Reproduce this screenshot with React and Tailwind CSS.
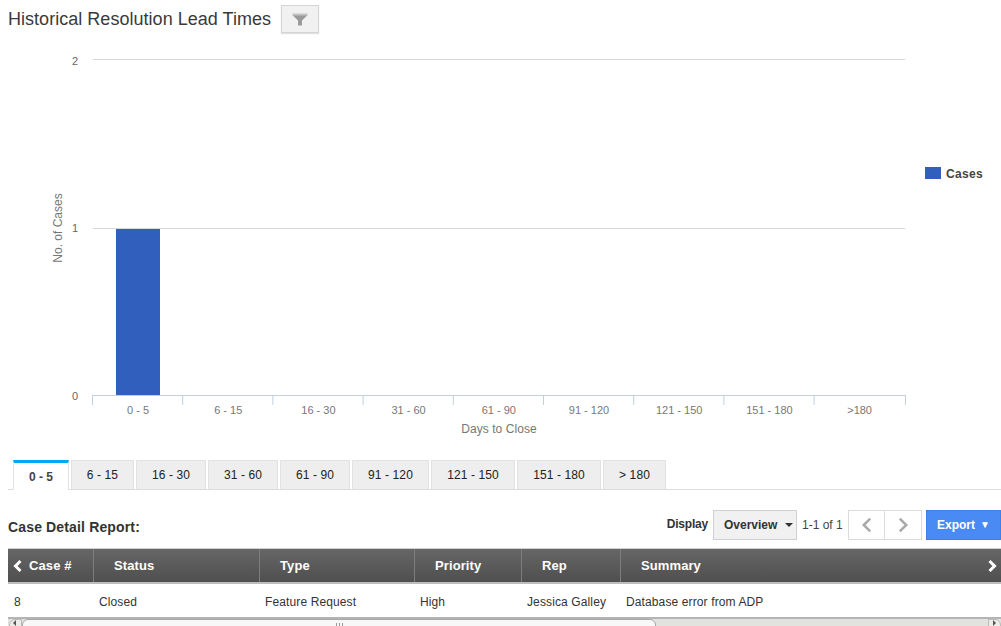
const tabs = [
    { label: "0 - 5", w: "w-[56px]", active: true },
    { label: "6 - 15", w: "w-[63px]" },
    { label: "16 - 30", w: "w-[70px]" },
    { label: "31 - 60", w: "w-[70px]" },
    { label: "61 - 90", w: "w-[70px]" },
    { label: "91 - 120", w: "w-[77px]" },
    { label: "121 - 150", w: "w-[84px]" },
    { label: "151 - 180", w: "w-[84px]" },
    { label: "> 180", w: "w-[63px]" },
]

const columns = [
    { label: "Status", cell: "Closed", w: "w-[166px]" },
    { label: "Type", cell: "Feature Request", w: "w-[155px]" },
    { label: "Priority", cell: "High", w: "w-[107px]" },
    { label: "Rep", cell: "Jessica Galley", w: "w-[99px]" },
]

const ticks = ["0 - 5", "6 - 15", "16 - 30", "31 - 60", "61 - 90", "91 - 120", "121 - 150", "151 - 180", ">180"]

const Chevron = ({ dir, size = 14, width = 2, color = "currentColor" }) => (
    <svg width={size} height={size} viewBox="0 0 14 14" fill="none">
        <path d={dir === "left" ? "M9.5 2 L4.5 7 L9.5 12" : "M4.5 2 L9.5 7 L4.5 12"} stroke={color} strokeWidth={width} />
    </svg>
)

const Chart = () => (
    <svg width="1001" height="405" viewBox="0 40 1001 405" className="block" fontFamily="'Liberation Sans', sans-serif">
        <line x1="93" x2="905" y1="59.5" y2="59.5" stroke="#d8d8d8" />
        <line x1="93" x2="905" y1="228.5" y2="228.5" stroke="#d8d8d8" />
        <text x="78" y="65" textAnchor="end" fontSize="11" fill="#666">2</text>
        <text x="78" y="232" textAnchor="end" fontSize="11" fill="#666">1</text>
        <text x="78" y="400" textAnchor="end" fontSize="11" fill="#666">0</text>
        <text transform="translate(62 228) rotate(-90)" textAnchor="middle" fontSize="12" fill="#777">No. of Cases</text>
        <rect x="116" y="229" width="44" height="166.5" fill="#315fbd" />
        <line x1="92.5" x2="905.5" y1="395.5" y2="395.5" stroke="#c0d0e0" />
        {ticks.map((t, i) => (
            <g key={t}>
                <line x1={92.5 + i * 90.2} x2={92.5 + i * 90.2} y1="395" y2="405" stroke="#c0d0e0" />
                <text x={138 + i * 90.2} y="414" textAnchor="middle" fontSize="11" fill="#777">{t}</text>
            </g>
        ))}
        <line x1="905.5" x2="905.5" y1="395" y2="405" stroke="#c0d0e0" />
        <text x="499" y="433" textAnchor="middle" fontSize="12" letterSpacing="0.05" fill="#777">Days to Close</text>
        <rect x="925" y="167" width="16" height="12" fill="#315fbd" />
        <text x="946" y="178" fontSize="12" fontWeight="700" letterSpacing="0.3" fill="#444">Cases</text>
    </svg>
)

export default function App() {
    return (
        <div className="w-[1001px] h-[626px] overflow-hidden bg-white font-['Liberation_Sans',sans-serif] text-[#333]">
            {/* Title */}
            <div className="h-[40px] pl-2 pt-[5px] flex items-start gap-[10px]">
                <h1 className="text-[18px] leading-[28px] tracking-[0.03px] text-[#3a3a3a]">Historical Resolution Lead Times</h1>
                <button className="w-[38px] h-[28px] flex items-center justify-center bg-[#f1f1f1] border border-[#d4d4d4] shadow-[0_1px_1px_rgba(0,0,0,0.12)]">
                    <svg width="16" height="13" viewBox="0 0 16 13">
                        <path d="M0.5 2 H15.5 L10 7.5 V12.5 H6 V7.5 Z" fill="#9a9a9a" />
                        <rect x="0.5" y="0.5" width="15" height="2" fill="#c4c4c4" />
                    </svg>
                </button>
            </div>

            <Chart />

            {/* Tabs */}
            <div className="mt-[15px] ml-[8px] h-[30px] pl-[5px] flex gap-[2px] border-b border-[#dcdcdc]">
                {tabs.map(t => (
                    <div
                        key={t.label}
                        className={t.active
                            ? `${t.w} h-[30px] bg-white border-t-[3px] border-t-[#00aaef] border-x border-x-[#e2e2e2] flex items-center justify-center text-[12px] font-bold text-[#444]`
                            : `${t.w} h-[29px] bg-[#eeeeee] border border-[#e2e2e2] border-b-0 flex items-center justify-center text-[12px] tracking-[0.1px] text-[#222]`}
                    >
                        {t.label}
                    </div>
                ))}
            </div>

            {/* Report header */}
            <div className="mt-[20px] h-[30px] pl-2 flex items-center justify-between">
                <h2 className="text-[14px] font-bold tracking-[0.15px] text-[#333] pt-[5px]">Case Detail Report:</h2>
                <div className="flex items-center">
                    <span className="text-[12px] font-bold tracking-[-0.2px] text-[#333] mr-[5px] mb-[2px]">Display</span>
                    <div className="w-[84px] h-[30px] bg-[#f1f1f1] border border-[#d0d0d0] flex items-center justify-between pl-[10px] pr-[2px] text-[12px] font-bold text-[#333]">
                        Overview
                        <span className="w-0 h-0 border-x-[4px] border-x-transparent border-t-[4px] border-t-[#333] mr-[1px]" />
                    </div>
                    <span className="ml-[5px] text-[12px] text-[#444] w-[46px]">1-1 of 1</span>
                    <div className="flex h-[30px] border border-[#dcdcdc] bg-white">
                        <div className="w-[36px] flex items-center justify-center border-r border-[#dcdcdc]">
                            <Chevron dir="left" size={18} color="#aaa" width={2} />
                        </div>
                        <div className="w-[36px] flex items-center justify-center">
                            <Chevron dir="right" size={18} color="#aaa" width={2} />
                        </div>
                    </div>
                    <div className="ml-[4px] w-[75px] h-[30px] bg-[#4a8af4] border border-[#3f7fe6] flex items-center justify-center gap-[5px] text-[12px] font-bold text-white">
                        Export
                        <span className="text-[10px] leading-none">▼</span>
                    </div>
                </div>
            </div>

            {/* Table */}
            <div className="ml-[8px] mt-[8px]">
                <div className="h-[36px] flex items-stretch border-t border-t-[#cfcfcf] border-b-[2px] border-b-[#bdbdbd] bg-gradient-to-b from-[#666666] to-[#4f4f4f] text-[13px] font-bold tracking-[0.1px] text-white">
                    <div className="w-[86px] flex items-center pl-[3px] gap-[4px] border-r border-[#7d7d7d]">
                        <Chevron dir="left" size={14} width={3} />
                        Case #
                    </div>
                    {columns.map(c => (
                        <div key={c.label} className={`${c.w} flex items-center pl-[20px] border-r border-[#7d7d7d]`}>{c.label}</div>
                    ))}
                    <div className="flex-1 flex items-center justify-between pl-[20px] pr-[2px]">
                        Summary
                        <Chevron dir="right" size={14} width={3} />
                    </div>
                </div>
                <div className="h-[33px] pt-[3px] flex items-center text-[12px] tracking-[0.12px] text-[#333]">
                    <div className="w-[86px] pl-[6px]">8</div>
                    {columns.map(c => (
                        <div key={c.label} className={`${c.w} pl-[5px]`}>{c.cell}</div>
                    ))}
                    <div className="pl-[5px]">Database error from ADP</div>
                </div>
                {/* Scrollbar */}
                <div className="h-[9px] flex items-start bg-[#e2e2de] border-t-[2px] border-t-[#b4b4b4]">
                    <div className="w-[13px] h-[14px] ml-[1px] bg-[#ecece8] border border-[#bbb] rounded-l-[6px] flex items-center pl-[3px]">
                        <span className="w-0 h-0 border-y-[3px] border-y-transparent border-r-[3px] border-r-[#555] mb-[7px]" />
                    </div>
                    <div className="w-[634px] h-[14px] bg-[#f8f8f8] border border-[#a8a8a8] rounded-[6px] flex justify-center gap-[2px] pt-[3px]">
                        <span className="w-[1px] h-[4px] bg-[#999]" />
                        <span className="w-[1px] h-[4px] bg-[#999]" />
                        <span className="w-[1px] h-[4px] bg-[#999]" />
                    </div>
                    <div className="flex-1" />
                    <div className="w-[13px] h-[14px] bg-[#ecece8] border border-[#bbb] rounded-r-[6px] flex items-center justify-center">
                        <span className="w-0 h-0 border-y-[3px] border-y-transparent border-l-[3px] border-l-[#555] mb-[7px]" />
                    </div>
                </div>
            </div>
        </div>
    )
}
